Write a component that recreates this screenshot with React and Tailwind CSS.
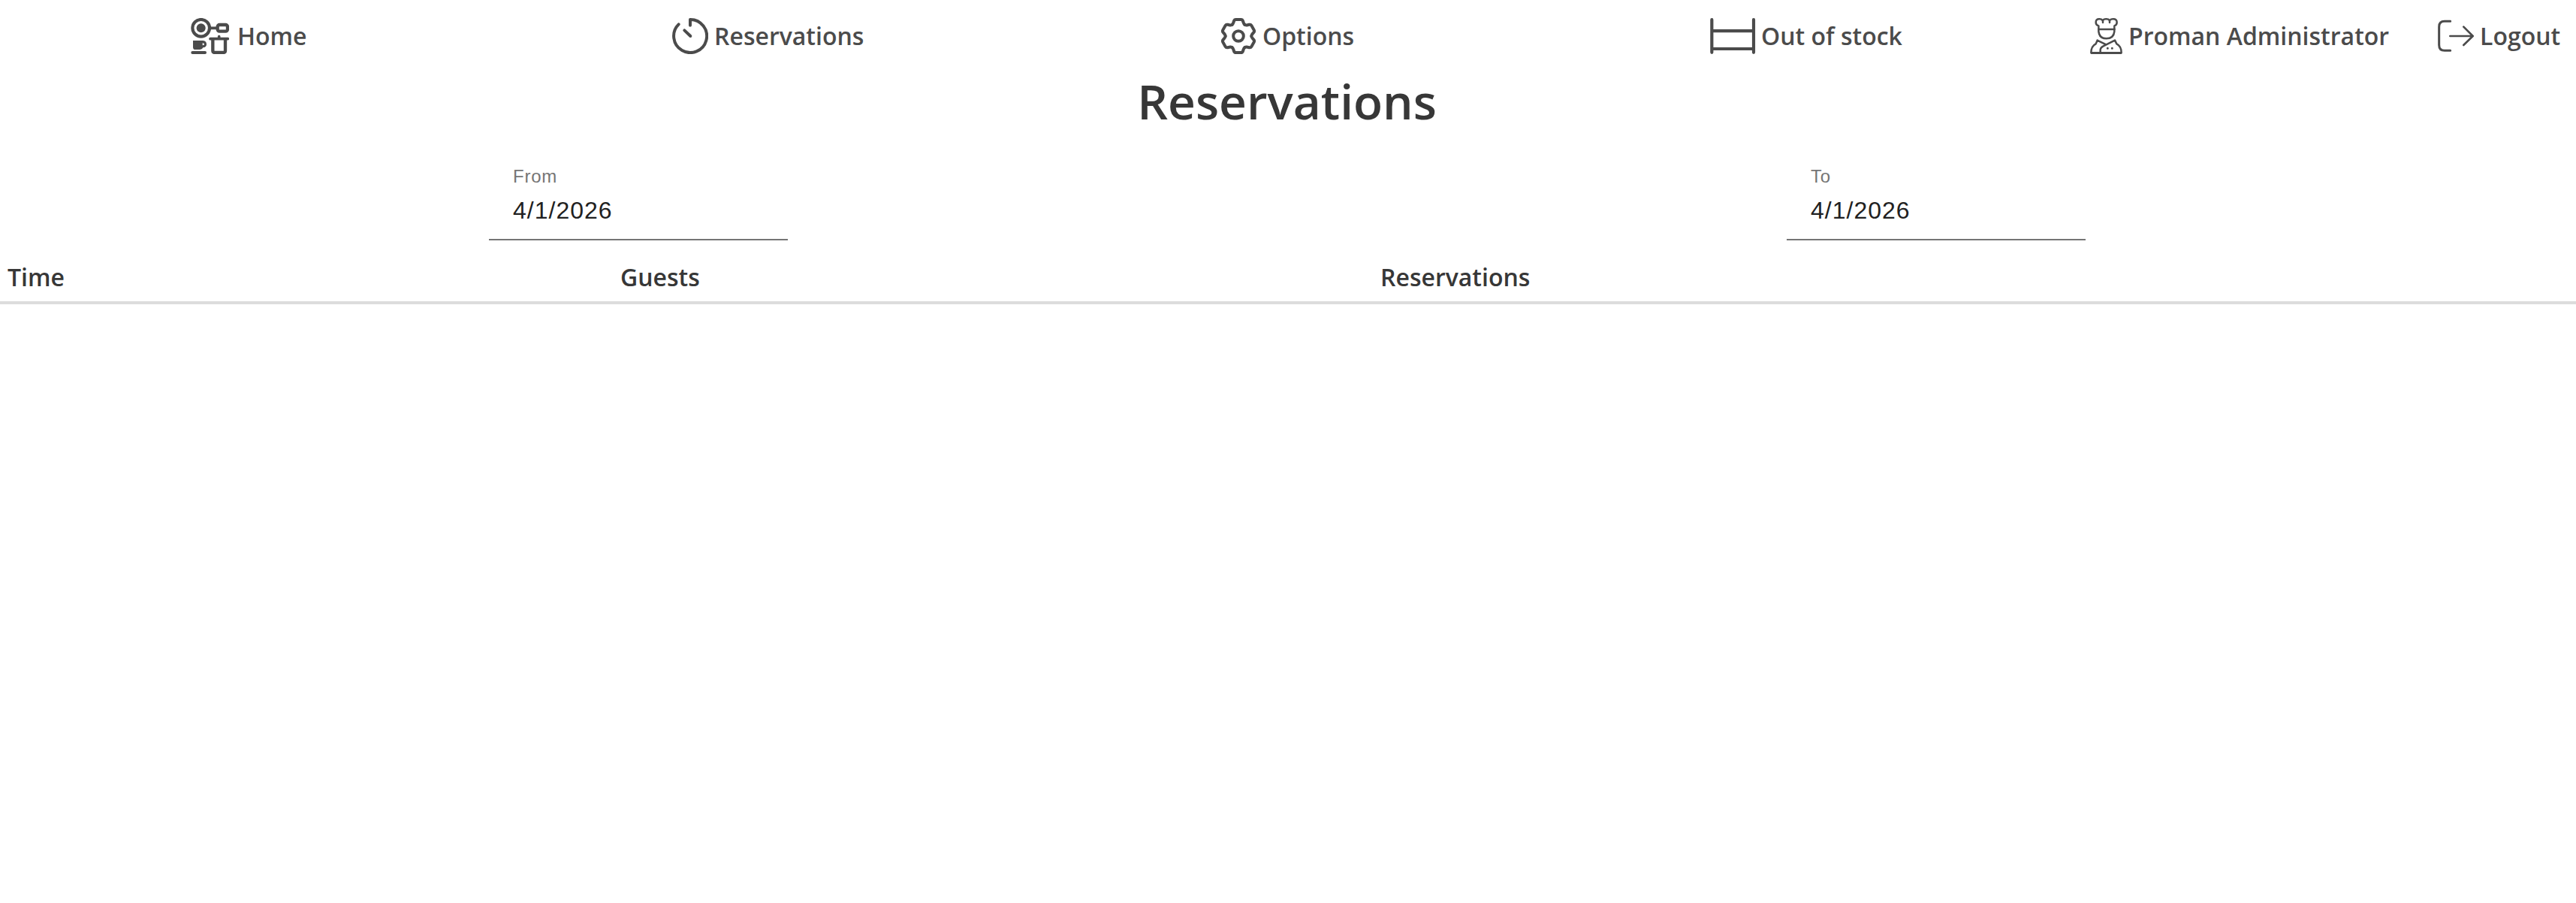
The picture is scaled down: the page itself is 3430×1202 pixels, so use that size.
import clsx from 'clsx';

const TOOTH_ANGLES = [0, 60, 120, 180, 240, 300];

function KitchenIcon() {
    return (
        <svg className="w-[51px] h-12 shrink-0" viewBox="42 42 153 144" fill="none" stroke="currentColor" strokeLinecap="round" strokeLinejoin="round">
            {/* Pan */}
            <circle cx="83" cy="82" r="34" strokeWidth="12.5" />
            <circle cx="83" cy="82" r="18" fill="currentColor" stroke="none" />
            <path d="M120 82H148" strokeWidth="11" />
            <rect x="149" y="69" width="40" height="26" rx="8" strokeWidth="13" />
            {/* Cup */}
            <path d="M51 132H91Q105 134 105 147Q105 159 91 160Q88 168 79 168H60Q51 168 51 158Z" fill="currentColor" stroke="none" />
            <path d="M89 142V151Q96 151 96 146.5Q96 142 89 142Z" fill="white" stroke="none" />
            <path d="M49 180H99" strokeWidth="12" />
            {/* Pot */}
            <path d="M120 125H190M155 116V122" strokeWidth="11" />
            <path d="M130 128V172Q130 180 138 180H172Q180 180 180 172V128" strokeWidth="13" />
        </svg>
    );
}

function TimerIcon() {
    return (
        <svg className="size-12 shrink-0" viewBox="45 42 144 144" fill="none" stroke="currentColor" strokeWidth="12" strokeLinecap="round" strokeLinejoin="round">
            <path d="M117 71V48A66 66 0 1 1 71 67" />
            <path d="M94 91L118 114" />
        </svg>
    );
}

function GearIcon() {
    return (
        <svg className="w-[46px] h-12 shrink-0" viewBox="-69 -72 138 144" fill="none" stroke="currentColor" strokeWidth="12" strokeLinecap="round">
            <circle r="20.5" />
            {TOOTH_ANGLES.map((angle) => (
                <path
                    key={angle}
                    transform={`rotate(${angle})`}
                    d="M-26 -45C-22 -47.5 -21 -50 -20 -54L-18 -60Q-16 -66 -10 -66H10Q16 -66 18 -60L20 -54C21 -50 22 -47.5 26 -45"
                />
            ))}
        </svg>
    );
}

function ShelfIcon() {
    return (
        <svg className="w-[61px] h-12 shrink-0" viewBox="51 42 183 144" fill="none" stroke="currentColor" strokeWidth="12.5" strokeLinecap="round">
            <path d="M58 48.5V179.5M225 48.5V179.5M58 93.5H225M58 165H225" />
        </svg>
    );
}

function ChefIcon() {
    return (
        <svg className="w-[43px] h-12 shrink-0" viewBox="39 42 129 144" fill="none" stroke="currentColor" strokeWidth="7.5" strokeLinecap="round" strokeLinejoin="round">
            {/* Hat */}
            <path d="M73 87V73Q62 70 62 59Q62 46 76 46Q84 46 89 51Q95 46 103 46Q112 46 117 51Q123 46 131 46Q146 46 146 59Q146 70 136 73V87" />
            <path d="M90 52V60M117 52V60M73 87H136" />
            {/* Face */}
            <path d="M73 87V96Q76 124 104 124Q133 124 136 96V87" />
            {/* Jacket */}
            <path d="M103 148L68 131L62 145Q43 154 43 181H164Q164 154 145 145L138 131L92 154Q80 160 80 170V181" />
            <path d="M45 182H162" />
            <path d="M109 163V163.1M127 163V163.1" strokeWidth="9" />
        </svg>
    );
}

function LogoutIcon() {
    return (
        <svg className="size-12 shrink-0" viewBox="48 42 144 144" fill="none" stroke="currentColor" strokeWidth="9" strokeLinecap="round" strokeLinejoin="round">
            <path d="M98 55H75Q53 55 53 77V150Q53 172 75 172H98" />
            <path d="M97 114H187M151 77L188 114L151 150" strokeWidth="8" />
        </svg>
    );
}

const navItems = [
    { label: 'Home', icon: KitchenIcon, gap: 'gap-[11px]' },
    { label: 'Reservations', icon: TimerIcon, gap: 'gap-2' },
    { label: 'Options', icon: GearIcon, gap: 'gap-[9px]' },
    { label: 'Out of stock', icon: ShelfIcon, gap: 'gap-[7px]' },
    { label: 'Proman Administrator', icon: ChefIcon, gap: 'gap-2' },
    { label: 'Logout', icon: LogoutIcon, gap: 'gap-2' },
];

function NavBar() {
    return (
        <nav className="grid h-24 grid-cols-[641px_731px_651px_506px_463px_1fr] items-center pl-[254px] text-[#4b4b4b]">
            {navItems.map(({ label, icon: Icon, gap }) => (
                <a key={label} href="#" className={clsx('flex items-center whitespace-nowrap', gap)}>
                    <Icon />
                    <span>{label}</span>
                </a>
            ))}
        </nav>
    );
}

function DateField({ label, value }) {
    return (
        <label className="flex h-28 w-[398px] flex-col border-b-2 border-[#757575] px-8 pt-3 font-['Liberation_Sans',Arial,sans-serif] font-normal">
            <span className="text-2xl leading-[30px] tracking-[0.75px] text-[#757575]">{label}</span>
            <input
                className="h-[60px] w-full bg-transparent text-[32px] tracking-[1px] text-[#212121] outline-none"
                defaultValue={value}
            />
        </label>
    );
}

export default function App() {
    return (
        <div className="min-h-[1202px] bg-white font-['Open_Sans',sans-serif] text-[32px] leading-[44px] font-semibold text-[#373737]">
            <NavBar />
            <h1 className="h-28 pr-[3px] text-center text-[64px] leading-[78px]">Reservations</h1>
            <div className="flex gap-[1330px] pl-[651px]">
                <DateField label="From" value="4/1/2026" />
                <DateField label="To" value="4/1/2026" />
            </div>
            <div className="mt-4 border-b-4 border-[#dcdcdc]">
                <table className="w-full table-fixed text-left">
                    <thead>
                        <tr className="h-[65px]">
                            <th className="w-[816px] pl-[10px] font-semibold">Time</th>
                            <th className="w-[1012px] pl-[10px] font-semibold">Guests</th>
                            <th className="pl-[10px] font-semibold">Reservations</th>
                        </tr>
                    </thead>
                </table>
            </div>
        </div>
    );
}
